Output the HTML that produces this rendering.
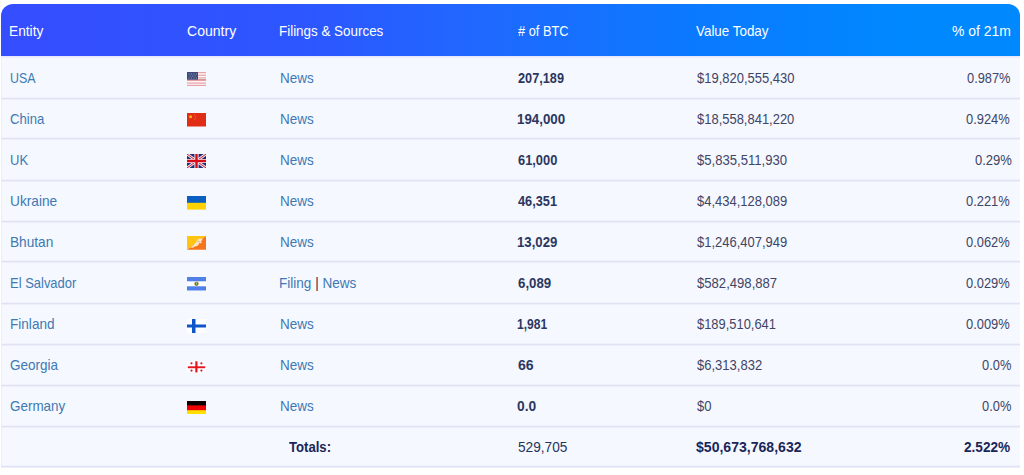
<!DOCTYPE html>
<html><head><meta charset="utf-8"><style>
html,body{margin:0;padding:0;background:#fff;width:1024px;height:475px;overflow:hidden;}
body{font-family:"Liberation Sans",sans-serif;font-size:14.4px;line-height:14.4px;position:relative;}
.tbl{position:absolute;left:1px;top:4px;width:1019px;height:463px;background:#f5f8ff;border-radius:12px 12px 0 0;}
.hd{position:absolute;left:0;top:0;width:1019px;height:52px;border-radius:12px 12px 0 0;background:linear-gradient(90deg,rgb(53,77,255) 0px,rgb(51,80,255) 99px,rgb(45,86,255) 299px,rgb(30,106,255) 499px,rgb(10,122,255) 699px,rgb(0,136,255) 899px,rgb(0,136,255) 1019px);}
.lb{position:absolute;left:0;top:52px;width:1px;height:411px;background:#eceef9;}
.hl{position:absolute;left:1px;top:56px;width:1019px;height:2px;background:linear-gradient(#e3e5fa,#eef0fc);}
.rb{position:absolute;right:-0.5px;top:51px;width:1px;height:411px;background:#eceefa;}
.ln{position:absolute;left:1px;width:1019px;height:1px;background:#e0e3f4;box-shadow:0 1px 0 #eceef9,0 -1px 0 #eff1fb;}
.x{position:absolute;white-space:nowrap;transform-origin:0 0;}
.h{color:#fff;}
.a{color:#4078b2;}
.p{color:#35304f;}
.b{color:#2b375f;font-weight:bold;}
.v{color:#3f4566;}
.tv{color:#27335e;}
.tb{color:#1a2657;font-weight:bold;}
svg{position:absolute;left:187px;}
</style></head><body>
<div class="tbl"><div class="hd"></div><div class="lb"></div></div>

<div class="hl"></div>
<div class="ln" style="top:98px"></div>
<div class="ln" style="top:138px"></div>
<div class="ln" style="top:180px"></div>
<div class="ln" style="top:221px"></div>
<div class="ln" style="top:261px"></div>
<div class="ln" style="top:303px"></div>
<div class="ln" style="top:344px"></div>
<div class="ln" style="top:385px"></div>
<div class="ln" style="top:426px"></div>
<div class="ln" style="top:466px"></div>
<svg style="top:72px" width="19" height="14" viewBox="0 0 19 14"><rect width="19" height="14" fill="#fff"/><g fill="#e9a3a8"><rect y="0" width="19" height="1.3"/><rect y="2.6" width="19" height="1.3"/><rect y="5.2" width="19" height="1.3"/><rect y="7.8" width="19" height="1.3"/><rect y="10.4" width="19" height="1.3"/><rect y="12.7" width="19" height="1.3"/></g><g fill="#c98088"><rect y="7.2" width="19" height="0.9"/></g><rect width="11" height="7.6" fill="#3d4a7a"/><g fill="#8e9ac0"><rect x="1.5" y="1.5" width="1" height="1"/><rect x="4" y="1.5" width="1" height="1"/><rect x="6.5" y="1.5" width="1" height="1"/><rect x="9" y="1.5" width="1" height="1"/><rect x="2.7" y="3.5" width="1" height="1"/><rect x="5.2" y="3.5" width="1" height="1"/><rect x="7.7" y="3.5" width="1" height="1"/><rect x="1.5" y="5.5" width="1" height="1"/><rect x="4" y="5.5" width="1" height="1"/><rect x="6.5" y="5.5" width="1" height="1"/><rect x="9" y="5.5" width="1" height="1"/></g></svg>
<svg style="top:113px" width="19" height="13.5" viewBox="0 0 19 13.5"><rect width="19" height="13.5" fill="#e02d16"/><circle cx="3.6" cy="3.8" r="1.5" fill="#f8b320"/><circle cx="7.3" cy="1.8" r="0.6" fill="#f06a1c"/><circle cx="8.3" cy="3.4" r="0.6" fill="#f06a1c"/><circle cx="8.3" cy="5.3" r="0.6" fill="#f06a1c"/><circle cx="7.3" cy="6.8" r="0.6" fill="#f06a1c"/></svg>
<svg style="top:154px" width="19" height="14" viewBox="0 0 19 14"><rect width="19" height="14" fill="#232a72"/><path d="M0 0L19 14M19 0L0 14" stroke="#f4e8ee" stroke-width="2.8"/><path d="M0 0L19 14M19 0L0 14" stroke="#c8202e" stroke-width="1"/><path d="M9.5 0V14M0 7H19" stroke="#f4e8ee" stroke-width="4.2"/><path d="M9.5 0V14M0 7H19" stroke="#d60c1a" stroke-width="2.4"/></svg>
<svg style="top:196px" width="19" height="13.6" viewBox="0 0 19 13.6"><rect width="19" height="13.6" fill="#ffd200"/><rect width="19" height="6.8" fill="#0b5fc1"/></svg>
<svg style="top:236px" width="19" height="13.7" viewBox="0 0 19 13.7"><path d="M0 0H19L0 13.7Z" fill="#ffc512"/><path d="M19 0V13.7H0Z" fill="#f7741a"/><path d="M3.5 12 L6 9.5 L7.5 8 L9 6.5 L10 4.5 L11.5 3 L13 2.5 L14.5 3 L15.5 2.8 L15.2 4.5 L14 5 L14.8 6.5 L13.5 7.5 L12 7 L11.5 9 L10 10 L8 10.5 L6.5 11.5 Z" fill="#fbe3c6"/><path d="M10 6 L12 5 L13 6.5" stroke="#e8a070" stroke-width="0.7" fill="none"/></svg>
<svg style="top:277px" width="19" height="13.5" viewBox="0 0 19 13.5"><rect width="19" height="13.5" fill="#fff"/><rect width="19" height="4.3" fill="#4f7fe8"/><rect y="9.3" width="19" height="4.2" fill="#4f7fe8"/><circle cx="9.5" cy="6.8" r="2.3" fill="#c9a640"/><circle cx="9.5" cy="6.8" r="1.7" fill="#2f7a52"/><rect x="8.9" y="5.5" width="1.2" height="2" fill="#a8d0b0"/></svg>
<svg style="top:318.6px" width="19" height="14" viewBox="0 0 19 14"><rect width="19" height="14" fill="#fdfdff"/><rect x="0" y="5.5" width="19" height="3" fill="#0d55c9"/><rect x="5" y="0" width="3.5" height="14" fill="#0d55c9"/></svg>
<svg style="top:361px" width="19" height="11.5" viewBox="0 0 19 11.5"><rect width="19" height="11.5" fill="#fdfdff"/><rect x="0.8" y="5.3" width="17.4" height="1.9" fill="#e5161d"/><rect x="8.3" y="0.3" width="2.2" height="11.1" fill="#e5161d"/><g fill="#c8202a"><circle cx="4.5" cy="2.3" r="1.1"/><circle cx="14.4" cy="2.3" r="1.1"/><circle cx="4.5" cy="9.6" r="1.1"/><circle cx="14.4" cy="9.6" r="1.1"/></g></svg>
<svg style="top:400.6px" width="19" height="13.5" viewBox="0 0 19 13.5"><rect width="19" height="13.5" fill="#ffe000"/><rect width="19" height="9.2" fill="#f20000"/><rect width="19" height="4.4" fill="#0a0000"/></svg>
<div id="t0" class="x h" style="left:9.27px;top:23.62px;transform:scaleX(0.9543)">Entity</div>
<div id="t1" class="x h" style="left:186.51px;top:23.62px;transform:scaleX(0.9761)">Country</div>
<div id="t2" class="x h" style="left:278.77px;top:23.62px;transform:scaleX(0.9315)">Filings &amp; Sources</div>
<div id="t3" class="x h" style="left:517.84px;top:23.62px;transform:scaleX(0.8894)"># of BTC</div>
<div id="t4" class="x h" style="left:696.12px;top:23.62px;transform:scaleX(0.9308)">Value Today</div>
<div id="t5" class="x h" style="left:951.92px;top:23.62px;transform:scaleX(0.9695)">% of 21m</div>
<div id="t6" class="x a" style="left:9.70px;top:70.92px;transform:scaleX(0.8621)">USA</div>
<div id="t7" class="x a" style="left:279.65px;top:70.92px;transform:scaleX(0.9373)">News</div>
<div id="t8" class="x b" style="left:518.00px;top:70.92px;transform:scaleX(0.8846)">207,189</div>
<div id="t9" class="x v" style="left:696.85px;top:70.92px;transform:scaleX(0.9028)">$19,820,555,430</div>
<div id="t10" class="x v" style="left:967.26px;top:70.92px;transform:scaleX(0.8916)">0.987%</div>
<div id="t11" class="x a" style="left:9.65px;top:111.92px;transform:scaleX(0.9136)">China</div>
<div id="t12" class="x a" style="left:279.65px;top:111.92px;transform:scaleX(0.9373)">News</div>
<div id="t13" class="x b" style="left:517.08px;top:111.92px;transform:scaleX(0.9241)">194,000</div>
<div id="t14" class="x v" style="left:696.86px;top:111.92px;transform:scaleX(0.9009)">$18,558,841,220</div>
<div id="t15" class="x v" style="left:966.42px;top:111.92px;transform:scaleX(0.8959)">0.924%</div>
<div id="t16" class="x a" style="left:9.66px;top:152.92px;transform:scaleX(0.9053)">UK</div>
<div id="t17" class="x a" style="left:279.65px;top:152.92px;transform:scaleX(0.9373)">News</div>
<div id="t18" class="x b" style="left:518.00px;top:152.92px;transform:scaleX(0.8931)">61,000</div>
<div id="t19" class="x v" style="left:696.85px;top:152.92px;transform:scaleX(0.9102)">$5,835,511,930</div>
<div id="t20" class="x v" style="left:974.68px;top:152.92px;transform:scaleX(0.9050)">0.29%</div>
<div id="t21" class="x a" style="left:9.63px;top:193.92px;transform:scaleX(0.9513)">Ukraine</div>
<div id="t22" class="x a" style="left:279.65px;top:193.92px;transform:scaleX(0.9373)">News</div>
<div id="t23" class="x b" style="left:518.00px;top:193.92px;transform:scaleX(0.8864)">46,351</div>
<div id="t24" class="x v" style="left:696.86px;top:193.92px;transform:scaleX(0.9011)">$4,434,128,089</div>
<div id="t25" class="x v" style="left:966.42px;top:193.92px;transform:scaleX(0.8959)">0.221%</div>
<div id="t26" class="x a" style="left:9.63px;top:234.92px;transform:scaleX(0.9500)">Bhutan</div>
<div id="t27" class="x a" style="left:279.65px;top:234.92px;transform:scaleX(0.9373)">News</div>
<div id="t28" class="x b" style="left:517.08px;top:234.92px;transform:scaleX(0.9166)">13,029</div>
<div id="t29" class="x v" style="left:696.86px;top:234.92px;transform:scaleX(0.9011)">$1,246,407,949</div>
<div id="t30" class="x v" style="left:966.42px;top:234.92px;transform:scaleX(0.8959)">0.062%</div>
<div id="t31" class="x a" style="left:9.66px;top:275.92px;transform:scaleX(0.9014)">El Salvador</div>
<div id="t32" class="x " style="left:278.86px;top:275.92px;transform:scaleX(0.9412)"><span class="a">Filing</span> <span class="p">|</span> <span class="a">News</span></div>
<div id="t33" class="x b" style="left:518.00px;top:275.92px;transform:scaleX(0.9222)">6,089</div>
<div id="t34" class="x v" style="left:696.85px;top:275.92px;transform:scaleX(0.9104)">$582,498,887</div>
<div id="t35" class="x v" style="left:966.42px;top:275.92px;transform:scaleX(0.8959)">0.029%</div>
<div id="t36" class="x a" style="left:9.63px;top:316.92px;transform:scaleX(0.9435)">Finland</div>
<div id="t37" class="x a" style="left:279.65px;top:316.92px;transform:scaleX(0.9373)">News</div>
<div id="t38" class="x b" style="left:517.16px;top:316.92px;transform:scaleX(0.8401)">1,981</div>
<div id="t39" class="x v" style="left:696.86px;top:316.92px;transform:scaleX(0.8966)">$189,510,641</div>
<div id="t40" class="x v" style="left:966.42px;top:316.92px;transform:scaleX(0.8959)">0.009%</div>
<div id="t41" class="x a" style="left:9.63px;top:357.92px;transform:scaleX(0.9376)">Georgia</div>
<div id="t42" class="x a" style="left:279.65px;top:357.92px;transform:scaleX(0.9373)">News</div>
<div id="t43" class="x b" style="left:518.00px;top:357.92px;transform:scaleX(0.9779)">66</div>
<div id="t44" class="x v" style="left:696.86px;top:357.92px;transform:scaleX(0.9042)">$6,313,832</div>
<div id="t45" class="x v" style="left:981.55px;top:357.92px;transform:scaleX(0.8938)">0.0%</div>
<div id="t46" class="x a" style="left:9.65px;top:398.92px;transform:scaleX(0.9345)">Germany</div>
<div id="t47" class="x a" style="left:279.65px;top:398.92px;transform:scaleX(0.9373)">News</div>
<div id="t48" class="x b" style="left:517.04px;top:398.92px;transform:scaleX(0.9580)">0.0</div>
<div id="t49" class="x v" style="left:696.85px;top:398.92px;transform:scaleX(0.9069)">$0</div>
<div id="t50" class="x v" style="left:981.55px;top:398.92px;transform:scaleX(0.8938)">0.0%</div>
<div id="t51" class="x tb" style="left:289.29px;top:439.92px;transform:scaleX(0.9111)">Totals:</div>
<div id="t52" class="x tv" style="left:517.64px;top:439.92px;transform:scaleX(0.9492)">529,705</div>
<div id="t53" class="x tb" style="left:696.06px;top:439.92px;transform:scaleX(0.9767)">$50,673,768,632</div>
<div id="t54" class="x tb" style="left:964.00px;top:439.92px;transform:scaleX(0.9470)">2.522%</div>
</body></html>
